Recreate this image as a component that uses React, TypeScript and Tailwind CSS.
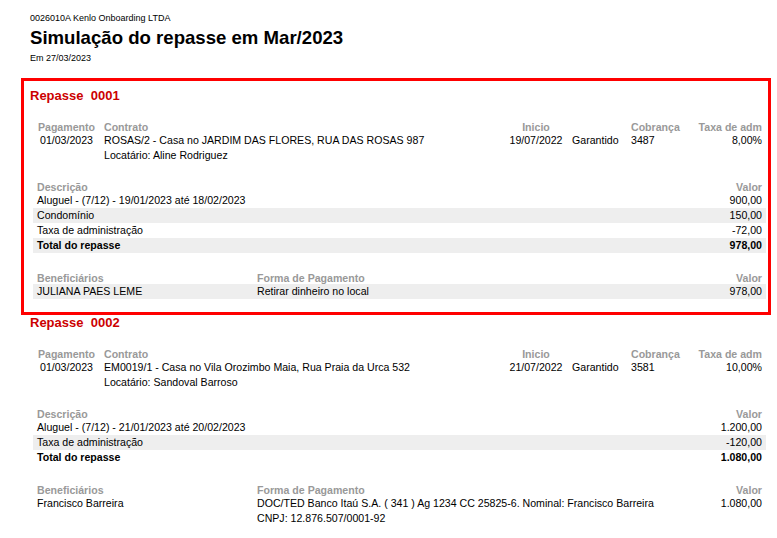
const repasses = [
  {
    id: "0001",
    highlight: true,
    pagamento: "01/03/2023",
    contrato: "ROSAS/2 - Casa no JARDIM DAS FLORES, RUA DAS ROSAS 987",
    locatario: "Aline Rodriguez",
    inicio: "19/07/2022",
    garantia: "Garantido",
    cobranca: "3487",
    taxa: "8,00%",
    itens: [
      { desc: "Aluguel - (7/12) - 19/01/2023 até 18/02/2023", valor: "900,00" },
      { desc: "Condomínio", valor: "150,00" },
      { desc: "Taxa de administração", valor: "-72,00" },
    ],
    total: "978,00",
    beneficiario: "JULIANA PAES LEME",
    forma: ["Retirar dinheiro no local"],
    valorBenef: "978,00",
  },
  {
    id: "0002",
    highlight: false,
    pagamento: "01/03/2023",
    contrato: "EM0019/1 - Casa no Vila Orozimbo Maia, Rua Praia da Urca 532",
    locatario: "Sandoval Barroso",
    inicio: "21/07/2022",
    garantia: "Garantido",
    cobranca: "3581",
    taxa: "10,00%",
    itens: [
      { desc: "Aluguel - (7/12) - 21/01/2023 até 20/02/2023", valor: "1.200,00" },
      { desc: "Taxa de administração", valor: "-120,00" },
    ],
    total: "1.080,00",
    beneficiario: "Francisco Barreira",
    forma: [
      "DOC/TED Banco Itaú S.A. ( 341 ) Ag 1234 CC 25825-6. Nominal: Francisco Barreira",
      "CNPJ: 12.876.507/0001-92",
    ],
    valorBenef: "1.080,00",
  },
];

type Repasse = (typeof repasses)[number];

const label =
  "text-[10.6px] leading-[12px] font-bold text-[#999999] px-[4px] whitespace-nowrap";
const cell = "text-[10.6px] leading-[15px] text-black px-[4px]";

function RepasseBlock({ r }: { r: Repasse }) {
  const band = r.highlight ? "bg-[#eeeeee]" : "";
  return (
    <section
      className={
        r.highlight
          ? "w-[750px] border-[3px] border-[#ff0000] pt-[7px] pb-[13px]"
          : "w-[750px] border-x-[3px] border-transparent pb-4"
      }
    >
      <h2 className="pl-[6px] text-[13px] leading-[15px] font-bold text-[#cc0000] whitespace-pre">
        {`Repasse  ${r.id}`}
      </h2>

      {/* Dados do contrato */}
      <div className="ml-[9px] w-[733px] mt-[18px] grid grid-cols-[67px_404px_64px_59px_66px_73px]">
        <div className={`${label} text-center`}>Pagamento</div>
        <div className={label}>Contrato</div>
        <div className={`${label} text-center`}>Inicio</div>
        <div className={label}></div>
        <div className={label}>Cobrança</div>
        <div className={`${label} text-right`}>Taxa de adm</div>

        <div className={`${cell} text-center`}>{r.pagamento}</div>
        <div className={cell}>{r.contrato}</div>
        <div className={`${cell} text-center`}>{r.inicio}</div>
        <div className={cell}>{r.garantia}</div>
        <div className={cell}>{r.cobranca}</div>
        <div className={`${cell} text-right`}>{r.taxa}</div>

        <div className={cell}></div>
        <div className={`${cell} col-span-5`}>Locatário: {r.locatario}</div>
      </div>

      {/* Itens */}
      <div className="ml-[9px] w-[733px] mt-[18px]">
        <div className="flex justify-between">
          <div className={label}>Descrição</div>
          <div className={label}>Valor</div>
        </div>
        {r.itens.map((it, i) => (
          <div
            key={it.desc}
            className={`flex justify-between ${i % 2 === 1 ? "bg-[#eeeeee]" : ""}`}
          >
            <div className={cell}>{it.desc}</div>
            <div className={cell}>{it.valor}</div>
          </div>
        ))}
        <div
          className={`flex justify-between ${r.itens.length % 2 === 1 ? "bg-[#eeeeee]" : ""}`}
        >
          <div className={`${cell} font-bold`}>Total do repasse</div>
          <div className={`${cell} font-bold`}>{r.total}</div>
        </div>
      </div>

      {/* Beneficiários */}
      <div className="ml-[9px] w-[733px] mt-[19px] grid grid-cols-[220px_437px_76px]">
        <div className={label}>Beneficiários</div>
        <div className={label}>Forma de Pagamento</div>
        <div className={`${label} text-right`}>Valor</div>

        <div className={`${cell} ${band}`}>{r.beneficiario}</div>
        <div className={`${cell} ${band}`}>
          {r.forma.map((f) => (
            <div key={f}>{f}</div>
          ))}
        </div>
        <div className={`${cell} text-right ${band}`}>{r.valorBenef}</div>
      </div>
    </section>
  );
}

export default function App() {
  return (
    <div
      className="min-h-screen bg-white pl-[21px] pt-[12px] text-black"
      style={{ fontFamily: '"Liberation Sans", Arial, sans-serif' }}
    >
      {/* Cabeçalho */}
      <header className="pl-[9px]">
        <p className="text-[9px] leading-[12px]">0026010A Kenlo Onboarding LTDA</p>
        <h1 className="mt-[3px] text-[18.6px] leading-[22px] font-bold">
          Simulação do repasse em Mar/2023
        </h1>
        <p className="mt-[3px] text-[9px] leading-[12px]">Em 27/03/2023</p>
      </header>

      <div className="mt-[14px]">
        {repasses.map((r) => (
          <RepasseBlock key={r.id} r={r} />
        ))}
      </div>
    </div>
  );
}
